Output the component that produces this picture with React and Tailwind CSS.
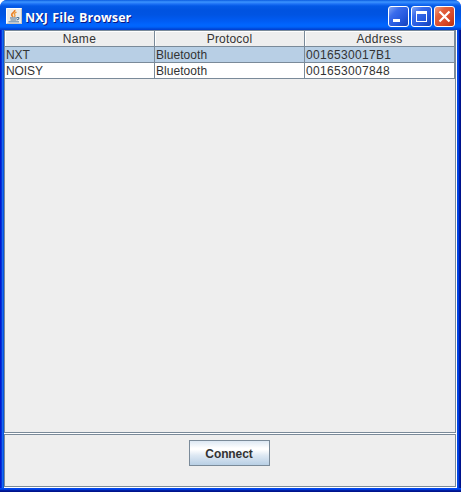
const columns = [
  { title: "Name", spacing: "tracking-[0.4px]" },
  { title: "Protocol", spacing: "tracking-[0.2px]" },
  { title: "Address", spacing: "tracking-[0.25px]" },
];

const devices = [
  { name: "NXT", protocol: "Bluetooth", address: "0016530017B1", selected: true },
  { name: "NOISY", protocol: "Bluetooth", address: "001653007848", selected: false },
];

function JavaIcon() {
  return (
    <svg width="16" height="16" viewBox="0 0 16 16" className="block">
      <rect width="16" height="16" rx="1" fill="#eeece8" />
      <path d="M.5 15.5V.5h15" fill="none" stroke="#fff" />
      <path d="M15.5 1v14.5H1" fill="none" stroke="#c9c6c0" />
      <path d="M8.800 2c.5 2-3.300 3-3.100 4.800 0 .9.900 1.500 1.300 2.200" fill="none" stroke="#e8822a" strokeWidth="1.700" />
      <path d="M10.500 4.200c-2 .8-2.700 1.600-1.700 2.700.4.600.1 1.400-.5 2" fill="none" stroke="#ef9a3c" strokeWidth="1.400" />
      <path d="M4 10h7M4.500 12h6" fill="none" stroke="#4c7396" strokeWidth="1.200" />
      <path d="M2.500 13.800h10.500" fill="none" stroke="#6f92b0" strokeWidth="1.200" />
      <path d="M11 9.500c2.600-.5 2.600 1.700 0 2.400" fill="none" stroke="#4c7396" strokeWidth="1.100" />
    </svg>
  );
}

function CaptionButton({ close, label, children }) {
  return (
    <button
      aria-label={label}
      className={`h-[21px] w-[21px] rounded-[3px] border border-white ${
        close
          ? "bg-[linear-gradient(135deg,#f0a088_0%,#e2603c_30%,#d9492a_65%,#b8300f_100%)]"
          : "bg-[linear-gradient(135deg,#83a6f4_0%,#3a6cec_30%,#2558de_65%,#1440b8_100%)]"
      }`}
    >
      <svg width="19" height="19" viewBox="0 0 19 19" shapeRendering="crispEdges" className="block">
        {children}
      </svg>
    </button>
  );
}

function TitleBar() {
  return (
    <header className="flex h-[30px] shrink-0 items-start rounded-t-[7px] bg-[linear-gradient(180deg,#0a5be0_0px,#3c94ff_2px,#1c70f5_4px,#0359e6_6px,#0053e0_10px,#0054e3_15px,#005cf4_21px,#0066ff_25px,#0062fa_27px,#0047d5_29px,#003dd7_30px)] pl-[6px] pr-[6px]">
      <div className="mt-[8px]">
        <JavaIcon />
      </div>
      <h1 className="ml-[3px] mt-[8px] whitespace-nowrap font-['Open_Sans',sans-serif] text-[12.5px] font-bold leading-[19px] tracking-[0.1px] text-white [text-shadow:1px_1px_0_#0a1883] [word-spacing:1px]">
        NXJ File Browser
      </h1>
      <div className="ml-auto mt-[6px] flex gap-[2px]">
        <CaptionButton label="Minimize">
          <path d="M4 12h7v3H4z" fill="#fff" />
        </CaptionButton>
        <CaptionButton label="Maximize">
          <path d="M4 4h11v11H4zM5 7v7h9V7z" fill="#fff" fillRule="evenodd" />
        </CaptionButton>
        <CaptionButton label="Close" close>
          <path d="M4.500 4.500l10 10M14.500 4.500l-10 10" stroke="#fff" strokeWidth="2.200" shapeRendering="auto" />
        </CaptionButton>
      </div>
    </header>
  );
}

function Pane({ className, children }) {
  return (
    <section className={`border-b border-r border-white ${className}`}>
      <div className="h-full border border-[#7a8a99] bg-[#eeeeee]">{children}</div>
    </section>
  );
}

export default function App() {
  return (
    <div className="h-[492px] w-[461px] overflow-hidden bg-white font-['Liberation_Sans',Arial,sans-serif] text-[12px] text-[#333333]">
      <div className="flex h-full flex-col rounded-t-[7px] bg-[#0045e6]">
        <TitleBar />
        <div className="flex min-h-0 flex-1">
          <div className="w-[4px] bg-[linear-gradient(90deg,#0019cf_0_1px,#0831d9_1px_2px,#166aee_2px_3px,#0855dd_3px_4px)]" />
          <main className="flex w-[453px] flex-col">
            <Pane className="h-[404px]">
              <div className="flex">
                {columns.map((c) => (
                  <div
                    key={c.title}
                    className={`h-[16px] w-[150px] border-b border-r border-b-[#7a8a99] border-r-[#7a8a99] text-center leading-[17px] shadow-[inset_1px_1px_0_#fff] ${c.spacing}`}
                  >
                    {c.title}
                  </div>
                ))}
              </div>
              {devices.map((d) => (
                <div key={d.address} className={`flex ${d.selected ? "bg-[#b8cfe5]" : "bg-white"}`}>
                  <div className="h-[16px] w-[150px] border-b border-r border-[#7a8a99] pl-px leading-[16px] tracking-[-0.1px]">{d.name}</div>
                  <div className="h-[16px] w-[150px] border-b border-r border-[#7a8a99] pl-px leading-[16px] tracking-[0.05px]">{d.protocol}</div>
                  <div className="h-[16px] w-[150px] border-b border-r border-[#7a8a99] pl-px leading-[16px] tracking-[0.33px]">{d.address}</div>
                </div>
              ))}
            </Pane>
            <Pane className="h-[54px]">
              <div className="flex justify-center pr-[2px] pt-[5px]">
                <button className="h-[26px] w-[81px] border border-[#7a8a99] bg-[linear-gradient(180deg,#dde8f3_0%,#ffffff_30%,#ffffff_36%,#dde8f3_60%,#b8cfe5_100%)] text-[12px] font-bold leading-[26px] tracking-[-0.1px]">
                  Connect
                </button>
              </div>
            </Pane>
          </main>
          <div className="w-[4px] bg-[linear-gradient(90deg,#0046e8_0_1px,#003ddc_1px_2px,#001ea0_2px_3px,#00138c_3px_4px)]" />
        </div>
        <div className="h-[4px] shrink-0 bg-[linear-gradient(180deg,#0048f1_0_1px,#003ddc_1px_2px,#001ea0_2px_3px,#00138c_3px_4px)]" />
      </div>
    </div>
  );
}
